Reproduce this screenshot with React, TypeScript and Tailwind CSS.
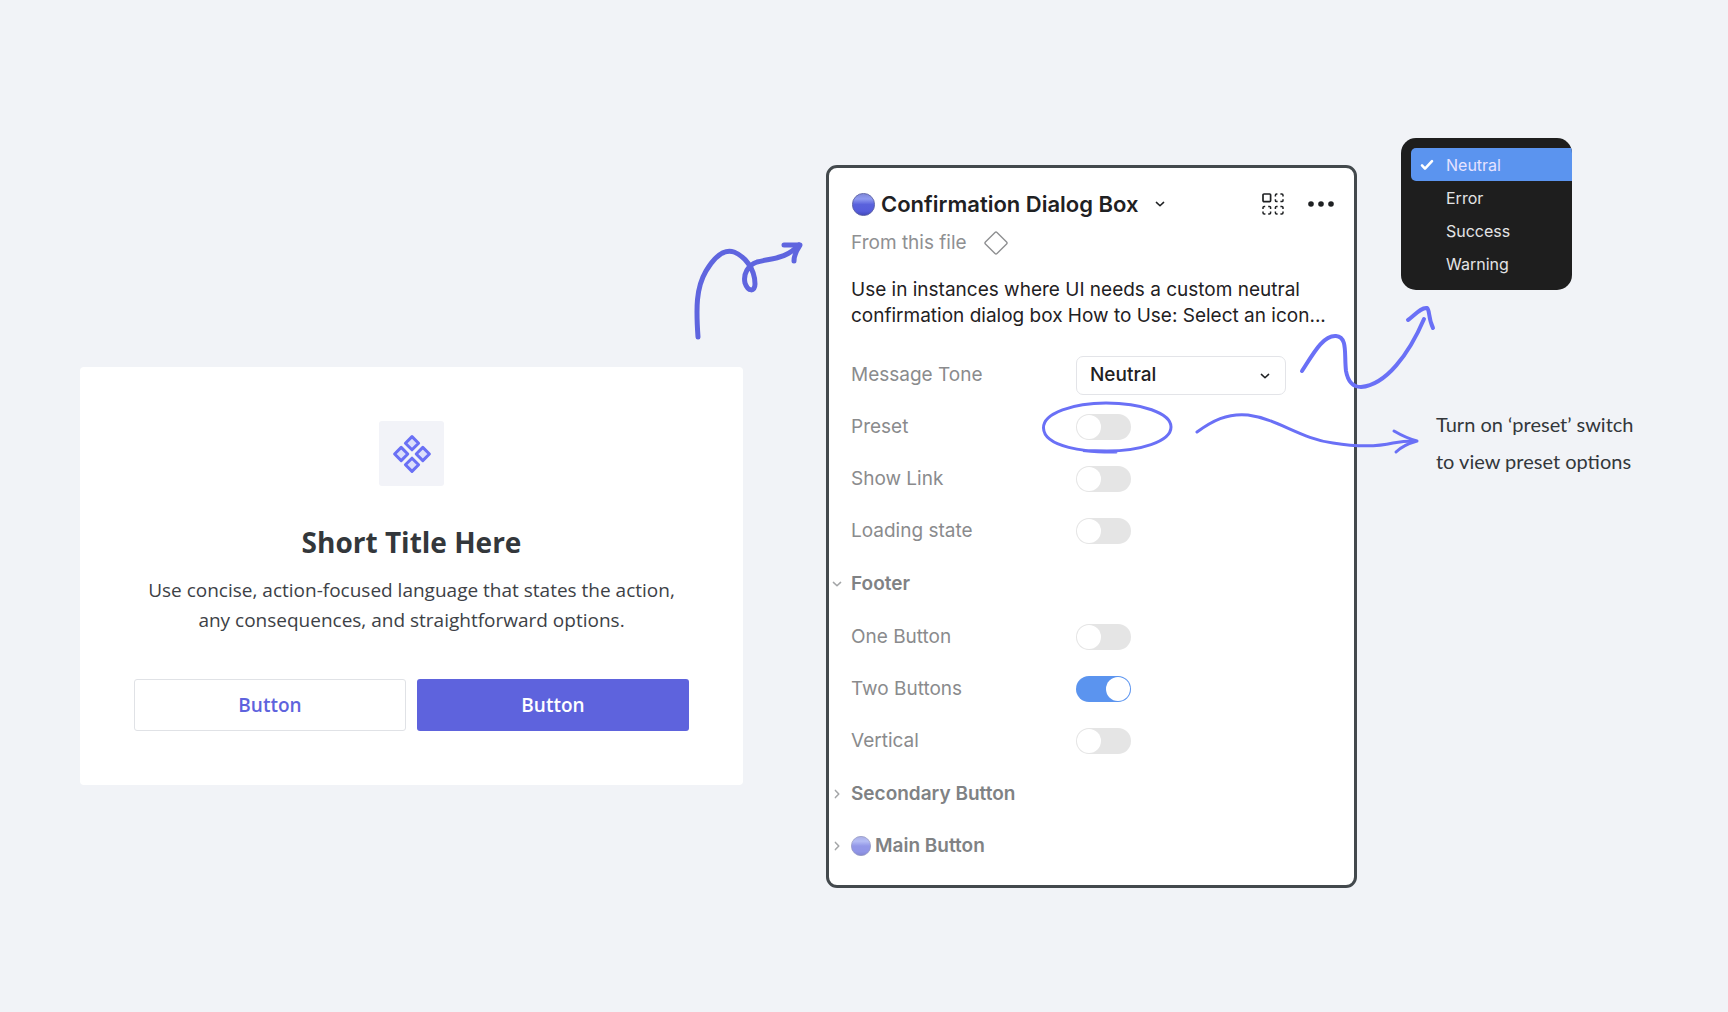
import React, { useState } from "react";

function Chevron({ className }: { className: string }) {
  return (
    <svg viewBox="0 0 10 10" className={className} fill="none" stroke="currentColor" strokeWidth="1.5" strokeLinecap="round" strokeLinejoin="round" aria-hidden="true">
      <path d="M1.4 3.4 5 6.8 8.6 3.4" />
    </svg>
  );
}

function Orb({ id, className }: { id: string; className: string }) {
  return (
    <svg viewBox="0 0 22 22" className={className} aria-hidden="true">
      <defs>
        <linearGradient id={id} x1="0" y1="0" x2="0" y2="1">
          <stop offset="0" stopColor="#7d86d8" />
          <stop offset="0.25" stopColor="#8f9af0" />
          <stop offset="0.5" stopColor="#5a62dc" />
          <stop offset="0.8" stopColor="#565ddb" />
          <stop offset="1" stopColor="#4147b8" />
        </linearGradient>
      </defs>
      <circle cx="11" cy="11" r="10.6" fill={`url(#${id})`} stroke="#5a5f9e" strokeWidth="0.8" />
    </svg>
  );
}

function DialogCard() {
  return (
    <section className="mt-[230px] flex flex-col items-center rounded-[4px] bg-white px-[54px] py-[54px] font-['Open_Sans',sans-serif]">
      <div className="flex size-[65px] items-center justify-center rounded-[3px] bg-[#f2f3f8]">
        <svg viewBox="0 0 40 40" className="size-10" fill="#dcdffb" stroke="#6a70f5" strokeWidth="3" strokeLinejoin="round" aria-hidden="true">
          <path d="M20 2.6 26.6 9.2 20 15.8 13.4 9.2Z" />
          <path d="M9.2 13.4 15.8 20 9.2 26.6 2.6 20Z" />
          <path d="M30.8 13.4 37.4 20 30.8 26.6 24.2 20Z" />
          <path d="M20 24.2 26.6 30.8 20 37.4 13.4 30.8Z" />
        </svg>
      </div>
      <h1 className="mt-9 text-[28px] leading-10 font-bold text-[#33373b]">Short Title Here</h1>
      <p className="mt-[13px] text-center text-[19px] leading-[30px] text-[#3d4146]">
        Use concise, action-focused language that states the action, any consequences, and straightforward options.
      </p>
      <div className="mt-11 grid w-full grid-cols-2 gap-[11px] text-[19px] font-semibold">
        <button type="button" className="h-[52px] rounded-[3px] border border-[#e0e2e6] bg-white text-[#5e63dd]">Button</button>
        <button type="button" className="h-[52px] rounded-[3px] bg-[#5e63dd] text-white">Button</button>
      </div>
    </section>
  );
}

function Toggle({ id, on = false }: { id: string; on?: boolean }) {
  const [checked, setChecked] = useState(on);
  return (
    <input
      id={id}
      type="checkbox"
      role="switch"
      checked={checked}
      onChange={(e) => setChecked(e.target.checked)}
      className="block h-[26px] w-[55px] cursor-pointer appearance-none rounded-full bg-[#e5e5e5] p-px before:block before:size-6 before:rounded-full before:bg-white checked:bg-[#5b94ef] checked:before:ml-[29px]"
    />
  );
}

function Row({ label, id, children }: { label: string; id: string; children: React.ReactNode }) {
  return (
    <div className="grid h-[52px] grid-cols-[225px_1fr] items-center">
      <label htmlFor={id} className="text-[#8a8b8d]">{label}</label>
      <div>{children}</div>
    </div>
  );
}

function Group({ open = false, children }: { open?: boolean; children: React.ReactNode }) {
  return (
    <button type="button" aria-expanded={open} className="relative flex h-[52px] w-full items-center gap-1 font-semibold text-[#808284]">
      <span className="absolute -left-[19px] text-[#a4a6a8]">
        <Chevron className={open ? "size-[10px]" : "size-[10px] -rotate-90"} />
      </span>
      {children}
    </button>
  );
}

function PropertiesPanel() {
  return (
    <section className="relative mt-[28px] rounded-[11px] border-[3px] border-[#43494d] bg-white pt-5 pr-[19px] pb-[13px] pl-[22px] font-[Inter,sans-serif] text-[19px] text-[#1f2123]">
      <header className="flex h-8 items-center justify-between">
        <button type="button" className="flex items-center">
          <Orb id="orb-title" className="ml-px size-[23px]" />
          <span className="ml-[6px] text-[22px] leading-8 font-semibold">Confirmation Dialog Box</span>
          <Chevron className="ml-4 size-[10px]" />
        </button>
        <div className="flex items-center gap-[23px]">
          <button type="button" aria-label="Variants">
            <svg viewBox="0 0 22 22" className="size-[22px]" fill="none" stroke="currentColor" strokeWidth="1.7" strokeLinejoin="round" aria-hidden="true">
              <rect x="1" y="1" width="7.6" height="7.6" rx="1" />
              <g strokeWidth="1.5">
                <path d="M13.4 3.6V2.2Q13.4 1 14.6 1H15.4M18.4 1H19.8Q21 1 21 2.2V3.6M21 6.2V7.4Q21 8.6 19.8 8.6H18.4M15.6 8.6H14.6Q13.4 8.6 13.4 7.4V6.2" />
                <path d="M1 16V14.6Q1 13.4 2.2 13.4H3.2M6.2 13.4H7.4Q8.6 13.4 8.6 14.6V16M8.6 18.6V19.8Q8.6 21 7.4 21H6.2M3.4 21H2.2Q1 21 1 19.8V18.6" />
                <path d="M13.4 16V14.6Q13.4 13.4 14.6 13.4H15.6M18.4 13.4H19.8Q21 13.4 21 14.6V16M21 18.6V19.8Q21 21 19.8 21H18.4M15.6 21H14.6Q13.4 21 13.4 19.8V18.6" />
              </g>
            </svg>
          </button>
          <button type="button" aria-label="More options">
            <svg viewBox="0 0 28 8" className="h-2 w-7" fill="currentColor" aria-hidden="true">
              <circle cx="4" cy="4" r="2.8" />
              <circle cx="14" cy="4" r="2.8" />
              <circle cx="24" cy="4" r="2.8" />
            </svg>
          </button>
        </div>
      </header>

      <div className="mt-[9px] flex h-[28px] items-center gap-4 text-[#8f9092]">
        <span>From this file</span>
        <svg viewBox="0 0 26 26" className="size-[26px]" fill="none" stroke="#8f9092" strokeWidth="1.4" strokeLinejoin="round" aria-hidden="true">
          <path d="M12 2.4Q13 1.4 14 2.4L23.6 12Q24.6 13 23.6 14L14 23.6Q13 24.6 12 23.6L2.4 14Q1.4 13 2.4 12Z" />
        </svg>
      </div>

      <p className="mt-5 leading-[26px]">
        Use in instances where UI needs a custom neutral
        <br />
        confirmation dialog box How to Use: Select an icon...
      </p>

      <div className="mt-5 flex flex-col gap-px">
        <div>
          <Row label="Message Tone" id="tone">
            <div className="relative h-[39px] w-[210px]">
              <select id="tone" defaultValue="Neutral" className="size-full appearance-none rounded-[7px] border border-[#e3e4e8] bg-white px-[13px] font-medium text-[#1f2123]">
                <option>Neutral</option>
                <option>Error</option>
                <option>Success</option>
                <option>Warning</option>
              </select>
              <Chevron className="pointer-events-none absolute top-[15px] right-4 size-[10px]" />
            </div>
          </Row>
          <Row label="Preset" id="preset">
            <div className="relative">
              <Toggle id="preset" />
              <svg viewBox="0 0 132 56" className="pointer-events-none absolute -top-[14px] -left-[35px] h-14 w-[132px]" fill="none" stroke="#6a70f6" strokeWidth="3" strokeLinecap="round" aria-hidden="true">
                <path d="M75 51C45 53 3 47 2.5 28C2 13 33 3 65 3C100 3 130 13 130 27C130 42 98 51 66 51L42 50.5C52 51.5 62 52.500 75 52" />
              </svg>
            </div>
          </Row>
          <Row label="Show Link" id="link"><Toggle id="link" /></Row>
          <Row label="Loading state" id="loading"><Toggle id="loading" /></Row>
        </div>
        <Group open>Footer</Group>
        <div>
          <Row label="One Button" id="one"><Toggle id="one" /></Row>
          <Row label="Two Buttons" id="two"><Toggle id="two" on /></Row>
          <Row label="Vertical" id="vertical"><Toggle id="vertical" /></Row>
        </div>
        <div>
          <Group>Secondary Button</Group>
          <Group>
            <Orb id="orb-main" className="size-5 opacity-65" />
            Main Button
          </Group>
        </div>
      </div>

      <svg viewBox="0 0 140 90" className="pointer-events-none absolute top-[136px] -right-[82px] h-[90px] w-[140px]" fill="none" stroke="#6a70f6" strokeWidth="4" strokeLinecap="round" strokeLinejoin="round" aria-hidden="true">
        <path d="M6 67C17 50 27 31 40 32C52 33 48 50 50 67C52 78 57 83 65 83C90 81 113 50 128 15" />
        <path d="M112 16C118 12 125 3 131 4C134 6 132 14 137 24" />
      </svg>
      <svg viewBox="0 0 230 50" className="pointer-events-none absolute top-[241px] -right-[69px] h-[50px] w-[230px]" fill="none" stroke="#6a70f6" strokeWidth="3" strokeLinecap="round" strokeLinejoin="round" aria-hidden="true">
        <path d="M4 23C19 12 34 4 55 6C85 10 108 30 140 34C165 38 183 38 200 34Q210 32 222 32" />
        <path d="M201 22Q213 29 224 32Q210 36 203 43" />
      </svg>
    </section>
  );
}

const tones = ["Neutral", "Error", "Success", "Warning"];

function ToneMenu() {
  return (
    <ul className="w-[171px] overflow-hidden rounded-[15px] bg-[#1e1e1e] py-[10px] pl-[10px] font-[Inter,sans-serif] text-[16px] text-[#e4e4e6]">
      {tones.map((tone, i) => (
        <li key={tone}>
          <button
            type="button"
            className={
              i === 0
                ? "flex h-[33px] w-full items-center rounded-l-[5px] bg-[#5b94ef] text-[#e6e2ff]"
                : "flex h-[33px] w-full items-center"
            }
          >
            <span className="flex w-[35px] pl-[9px]">
              {i === 0 && (
                <svg viewBox="0 0 14 12" className="h-3 w-[14px]" fill="none" stroke="white" strokeWidth="2.6" strokeLinecap="round" strokeLinejoin="round" aria-hidden="true">
                  <path d="M2 6.4 5 9.6 12 2.2" />
                </svg>
              )}
            </span>
            {tone}
          </button>
        </li>
      ))}
    </ul>
  );
}

export default function App() {
  return (
    <main className="grid min-h-screen grid-cols-[663fr_83px_531fr_291fr] items-start bg-[#f1f3f7] px-20 pt-[137px] pb-20">
      <DialogCard />
      <div className="relative">
        <svg viewBox="0 0 112 104" className="absolute top-[102px] right-[20px] h-[104px] w-[112px] max-w-none" fill="none" stroke="#5f65df" strokeWidth="5" strokeLinecap="round" strokeLinejoin="round" aria-hidden="true">
          <path d="M4 98C2 69 2 49 12 32C21 17 31 10 40 13C50 17 61 29 61 45C61 53 54 53 51 44C49 35 54 26 63 23C79 19 92 20 105 6" />
          <path d="M90 6H106C102 12 100 16 100 22" />
        </svg>
      </div>
      <PropertiesPanel />
      <aside className="pt-px pl-11">
        <ToneMenu />
        <p className="mt-[116px] pl-[35px] font-[Lato,sans-serif] text-[20px] leading-[37px] whitespace-nowrap text-[#33373b]">
          Turn on ‘preset’ switch
          <br />
          to view preset options
        </p>
      </aside>
    </main>
  );
}
